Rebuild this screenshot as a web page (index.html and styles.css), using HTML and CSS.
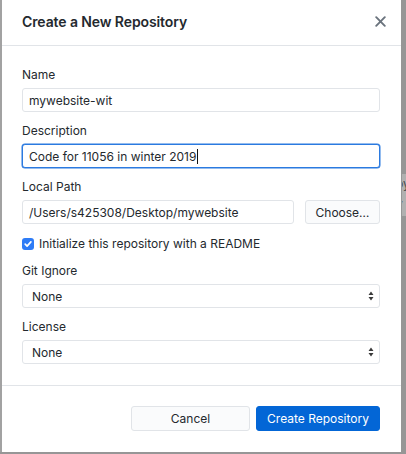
FILE: index.html
```html
<!DOCTYPE html>
<html lang="en">
<head>
<meta charset="utf-8">
<title>Create a New Repository</title>
<link rel="stylesheet" href="styles.css">
</head>
<body>
<div class="screen">
  <div class="edge-left"></div>
  <div class="dialog">
    <header class="dlg-header">
      <h1 class="title">Create a New Repository</h1>
      <span class="close" aria-label="Close">
        <svg width="11" height="11" viewBox="0 0 11 11"><path d="M1.2 1.2 L9.8 9.8 M9.8 1.2 L1.2 9.8" stroke="#6a737d" stroke-width="1.9" stroke-linecap="round"/></svg>
      </span>
    </header>
    <div class="dlg-body">
      <div class="field">
        <div class="lbl">Name</div>
        <div class="input">mywebsite-wit</div>
      </div>
      <div class="field">
        <div class="lbl">Description</div>
        <div class="input focused">Code for 11056 in winter 2019<span class="caret"></span></div>
      </div>
      <div class="field">
        <div class="lbl">Local Path</div>
        <div class="path-row">
          <div class="input grow">/Users/s425308/Desktop/mywebsite</div>
          <div class="btn choose">Choose…</div>
        </div>
      </div>
      <div class="check-row">
        <span class="checkbox">
          <svg width="12" height="12" viewBox="0 0 12 12"><path d="M3.2 6.2 L5.1 8.1 L8.9 3.9" fill="none" stroke="#fff" stroke-width="1.7" stroke-linecap="round" stroke-linejoin="round"/></svg>
        </span>
        <span class="check-label">Initialize this repository with a README</span>
      </div>
      <div class="field">
        <div class="lbl">Git Ignore</div>
        <div class="input select"><span>None</span>
          <svg class="arrows" width="6" height="10" viewBox="0 0 6 10"><path d="M3 0.5 L5.5 4 L0.5 4 Z M3 9.5 L5.5 6 L0.5 6 Z" fill="#3a3a3a"/></svg>
        </div>
      </div>
      <div class="field">
        <div class="lbl">License</div>
        <div class="input select"><span>None</span>
          <svg class="arrows" width="6" height="10" viewBox="0 0 6 10"><path d="M3 0.5 L5.5 4 L0.5 4 Z M3 9.5 L5.5 6 L0.5 6 Z" fill="#3a3a3a"/></svg>
        </div>
      </div>
    </div>
    <footer class="dlg-footer">
      <div class="btn cancel">Cancel</div>
      <div class="btn primary">Create Repository</div>
    </footer>
  </div>
  <div class="edge-right">
    <div class="peek"><span>py</span><span>y</span></div>
  </div>
</div>
</body>
</html>
```

FILE: styles.css
```css
* { box-sizing: border-box; }
html, body { margin: 0; padding: 0; }
body {
  background: #969696;
  font-family: Inter, "Liberation Sans", Arial, sans-serif;
  color: #24292e;
  font-size: 12px;
}
.screen {
  display: flex;
  width: 406px;
  height: 454px;
  overflow: hidden;
}
.edge-left {
  flex: 0 0 2px;
  height: 452px;
  background: #a2a2a2;
}
.dialog {
  flex: 0 0 399px;
  width: 399px;
  height: 452px;
  background: #fff;
  display: flex;
  flex-direction: column;
}
.dlg-header {
  height: 46px;
  border-bottom: 1px solid #e1e4e8;
  display: flex;
  align-items: center;
  justify-content: space-between;
  padding: 0 15px 3px 20px;
}
.title {
  margin: 0;
  font-size: 14px;
  font-weight: 600;
  color: #24292e;
  letter-spacing: -0.1px;
}
.close {
  display: flex;
  width: 11px;
  height: 11px;
}
.dlg-body {
  padding: 21px 21px 0 20px;
  display: flex;
  flex-direction: column;
  gap: 11px;
  flex: 1;
}
.field {
  display: flex;
  flex-direction: column;
}
.lbl {
  height: 16px;
  line-height: 16px;
  margin-bottom: 5px;
}
.input {
  height: 24px;
  border: 1px solid #e1e4e8;
  border-radius: 3px;
  background: #fff;
  padding: 0 6px;
  display: flex;
  align-items: center;
  font-size: 12px;
  white-space: nowrap;
}
.input.focused {
  border: 1.5px solid #2b7ae0;
  box-shadow: 0 0 0 0.5px #2b7ae0;
}
.caret {
  display: inline-block;
  width: 1px;
  height: 15px;
  background: #111;
  margin-left: 1px;
}
.path-row {
  display: flex;
  gap: 11px;
}
.grow { flex: 1; }
.btn {
  height: 24px;
  border: 1px solid #e1e4e8;
  border-radius: 3px;
  background: #fafbfc;
  display: flex;
  align-items: center;
  justify-content: center;
  font-size: 12px;
  color: #24292e;
  white-space: nowrap;
}
.choose { width: 75px; }
.check-row {
  height: 17px;
  display: flex;
  align-items: center;
  gap: 5px;
}
.checkbox {
  width: 12px;
  height: 12px;
  border-radius: 3px;
  background: #2e7cf6;
  display: flex;
}
.check-label { line-height: 17px; }
.select {
  justify-content: space-between;
  padding: 0 5px 0 9px;
}
.arrows { display: block; }
.dlg-footer {
  border-top: 1px solid #e1e4e8;
  height: 67px;
  display: flex;
  justify-content: flex-end;
  align-items: flex-start;
  gap: 6px;
  padding: 20px 21px 0 0;
}
.dlg-footer .btn { height: 25px; }
.cancel { width: 119px; }
.primary {
  width: 124px;
  background: #0366d6;
  border-color: #0366d6;
  color: #fff;
}
.edge-right {
  flex: 1 1 0;
  min-width: 0;
  height: 452px;
  padding-top: 174px;
  overflow: hidden;
}
.peek {
  margin-left: 1px;
  height: 42px;
  background: #b0b0b0;
  color: #4a4a4a;
  font-size: 12px;
  line-height: 20px;
  display: flex;
  flex-direction: column;
  overflow: hidden;
  white-space: nowrap;
}
.peek span { margin-left: -6px; }
```
